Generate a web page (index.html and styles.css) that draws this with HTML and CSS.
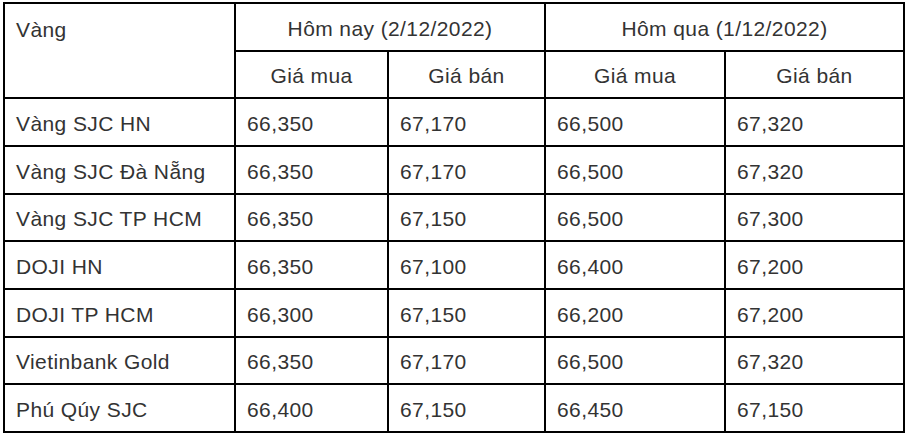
FILE: index.html
```html
<!DOCTYPE html>
<html lang="vi">
<head>
<meta charset="utf-8">
<title>Giá vàng</title>
<link rel="stylesheet" href="styles.css">
</head>
<body>
<table class="price-table">
  <colgroup>
    <col class="c-name">
    <col class="c-buy">
    <col class="c-sell">
    <col class="c-buy2">
    <col class="c-sell2">
  </colgroup>
  <thead>
    <tr>
      <th rowspan="2" class="name-head">Vàng</th>
      <th colspan="2" class="center">Hôm nay (2/12/2022)</th>
      <th colspan="2" class="center">Hôm qua (1/12/2022)</th>
    </tr>
    <tr>
      <th class="center">Giá mua</th>
      <th class="center">Giá bán</th>
      <th class="center">Giá mua</th>
      <th class="center">Giá bán</th>
    </tr>
  </thead>
  <tbody>
    <tr><td>Vàng SJC HN</td><td>66,350</td><td>67,170</td><td>66,500</td><td>67,320</td></tr>
    <tr><td>Vàng SJC Đà Nẵng</td><td>66,350</td><td>67,170</td><td>66,500</td><td>67,320</td></tr>
    <tr><td>Vàng SJC TP HCM</td><td>66,350</td><td>67,150</td><td>66,500</td><td>67,300</td></tr>
    <tr><td>DOJI HN</td><td>66,350</td><td>67,100</td><td>66,400</td><td>67,200</td></tr>
    <tr><td>DOJI TP HCM</td><td>66,300</td><td>67,150</td><td>66,200</td><td>67,200</td></tr>
    <tr><td>Vietinbank Gold</td><td>66,350</td><td>67,170</td><td>66,500</td><td>67,320</td></tr>
    <tr><td>Phú Qúy SJC</td><td>66,400</td><td>67,150</td><td>66,450</td><td>67,150</td></tr>
  </tbody>
</table>
</body>
</html>
```

FILE: styles.css
```css
html, body {
  margin: 0;
  padding: 0;
  background: #ffffff;
}

body {
  padding: 2px 0 0 3px;
}

.price-table {
  border-collapse: collapse;
  table-layout: fixed;
  width: 900px;
  font-family: "Liberation Sans", Arial, sans-serif;
  font-size: 21px;
  letter-spacing: 0.4px;
  color: #333333;
}

.c-name { width: 231px; }
.c-buy { width: 153px; }
.c-sell { width: 157px; }
.c-buy2 { width: 180px; }
.c-sell2 { width: 179px; }

.price-table th,
.price-table td {
  border: 2px solid #000000;
  height: 47.67px;
  padding: 4px 11px 0;
  font-weight: normal;
  text-align: left;
  vertical-align: middle;
  box-sizing: border-box;
  white-space: nowrap;
}

.price-table th.center {
  text-align: center;
}

.price-table th.name-head {
  vertical-align: top;
  padding-top: 14px;
}
```
